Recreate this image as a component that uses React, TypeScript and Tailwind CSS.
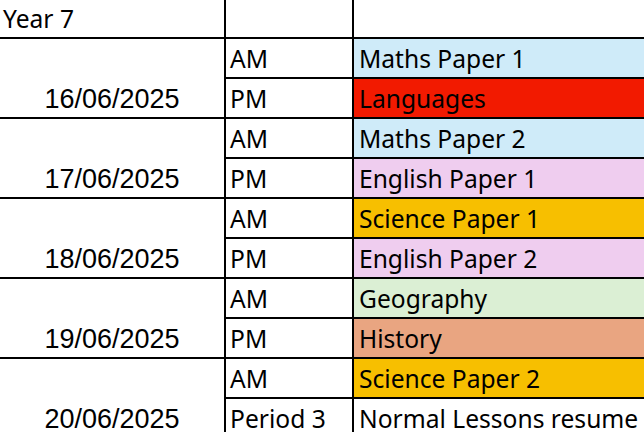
const days = [
  { date: '16/06/2025', am: ['Maths Paper 1', 'bg-[#cfebf9]'], pm: ['Languages', 'bg-[#f21a00]'], pmLabel: 'PM' },
  { date: '17/06/2025', am: ['Maths Paper 2', 'bg-[#cfebf9]'], pm: ['English Paper 1', 'bg-[#efcdef]'], pmLabel: 'PM' },
  { date: '18/06/2025', am: ['Science Paper 1', 'bg-[#f7bf00]'], pm: ['English Paper 2', 'bg-[#efcdef]'], pmLabel: 'PM' },
  { date: '19/06/2025', am: ['Geography', 'bg-[#dbefd4]'], pm: ['History', 'bg-[#e9a581]'], pmLabel: 'PM' },
  { date: '20/06/2025', am: ['Science Paper 2', 'bg-[#f7bf00]'], pm: ['Normal Lessons resume', 'bg-white'], pmLabel: 'Period 3' },
];

const cell = "flex items-end text-[24.6px] leading-none pb-[5px] text-black font-['Noto_Sans',sans-serif] whitespace-nowrap overflow-hidden";

export default function App() {
  return (
    <div className="w-[644px] h-[432px] overflow-hidden bg-white">
      <div className="grid grid-cols-[224px_126px_300px] grid-rows-[37px_repeat(10,38px)] gap-[2px] bg-black">
        <div className={`${cell} bg-white pl-[3px]`}>Year 7</div>
        <div className="bg-white" />
        <div className="bg-white" />
        {days.map((d) => (
          <div key={d.date} className="contents">
            <div className="row-span-2 bg-white flex items-end justify-center pb-[4px] text-[27px] leading-none font-['Liberation_Sans',Arial,sans-serif] text-black">
              {d.date}
            </div>
            <div className={`${cell} bg-white pl-[4px]`}>AM</div>
            <div className={`${cell} ${d.am[1]} pl-[5px]`}>{d.am[0]}</div>
            <div className={`${cell} bg-white pl-[4px]`}>{d.pmLabel}</div>
            <div className={`${cell} ${d.pm[1]} pl-[5px]`}>{d.pm[0]}</div>
          </div>
        ))}
      </div>
    </div>
  );
}
